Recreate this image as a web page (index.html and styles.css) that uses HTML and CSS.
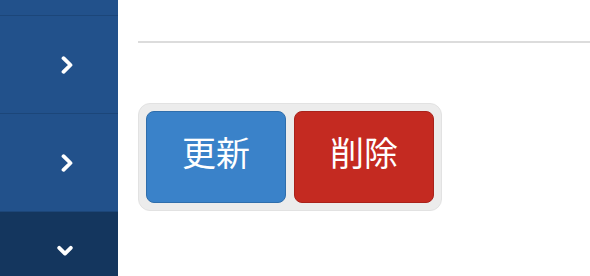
FILE: index.html
```html
<!DOCTYPE html>
<html>
  <head>
    <meta charset="UTF-8" />
    <title>編集</title>
    <link rel="stylesheet" href="styles.css">
  </head>
  <body>
    <div class="sidebar">
      <div class="side-item top"></div>
      <div class="side-item">
        <svg class="chev-right" width="14" height="18" viewBox="0 0 14 18">
          <path d="M3.5 2.2 L10.5 9 L3.5 15.8" />
        </svg>
      </div>
      <div class="side-item">
        <svg class="chev-right" width="14" height="18" viewBox="0 0 14 18">
          <path d="M3.5 2.2 L10.5 9 L3.5 15.8" />
        </svg>
      </div>
      <div class="side-item open">
        <svg class="chev-down" width="16" height="12" viewBox="0 0 16 12">
          <path d="M2.2 2.8 L8 8.6 L13.8 2.8" />
        </svg>
      </div>
    </div>

    <div class="main">
      <div class="divider"></div>

      <div class="btn-group">
        <button class="btn btn-update">更新</button>
        <button class="btn btn-delete">削除</button>
      </div>
    </div>
  </body>
</html>
```

FILE: styles.css
```css
body {
  margin: 0;
  width: 590px;
  height: 276px;
  overflow: hidden;
  display: flex;
  font-family: 'Noto Sans CJK JP', 'Noto Sans', sans-serif;
  background: #fff;
}

.sidebar {
  width: 118px;
  height: 276px;
  flex-shrink: 0;
  background-color: #22518b;
  display: flex;
  flex-direction: column;
}

.side-item {
  height: 97px;
  border-bottom: 1px solid #1c4679;
  display: flex;
  align-items: center;
  padding-left: 60px;
  flex-shrink: 0;
}

.side-item.top {
  height: 15px;
}

.side-item.open {
  flex: 1;
  height: auto;
  min-height: 0;
  background-color: #14365e;
  border-bottom: none;
  align-items: flex-start;
  padding-left: 57px;
  padding-top: 33px;
}

.chev-right path,
.chev-down path {
  fill: none;
  stroke: #fff;
  stroke-width: 3.8;
  stroke-linecap: round;
  stroke-linejoin: round;
}

.main {
  flex: 1;
  padding-left: 20px;
}

.divider {
  margin-top: 41px;
  height: 2px;
  background-color: #dcdcdc;
}

.btn-group {
  margin-top: 60px;
  display: inline-flex;
  gap: 8px;
  padding: 7px;
  border: 1px solid #e2e2e2;
  border-radius: 12px;
  background-color: #ececec;
}

.btn {
  width: 140px;
  height: 92px;
  border-radius: 8px;
  color: #fff;
  font-family: 'Noto Sans CJK JP', 'Noto Sans', sans-serif;
  font-size: 34px;
  cursor: pointer;
  padding: 0 0 12px;
}

.btn-update {
  background-color: #3a82c9;
  border: 1px solid #2f6eac;
}

.btn-delete {
  background-color: #c42a21;
  border: 1px solid #aa221b;
}
```
